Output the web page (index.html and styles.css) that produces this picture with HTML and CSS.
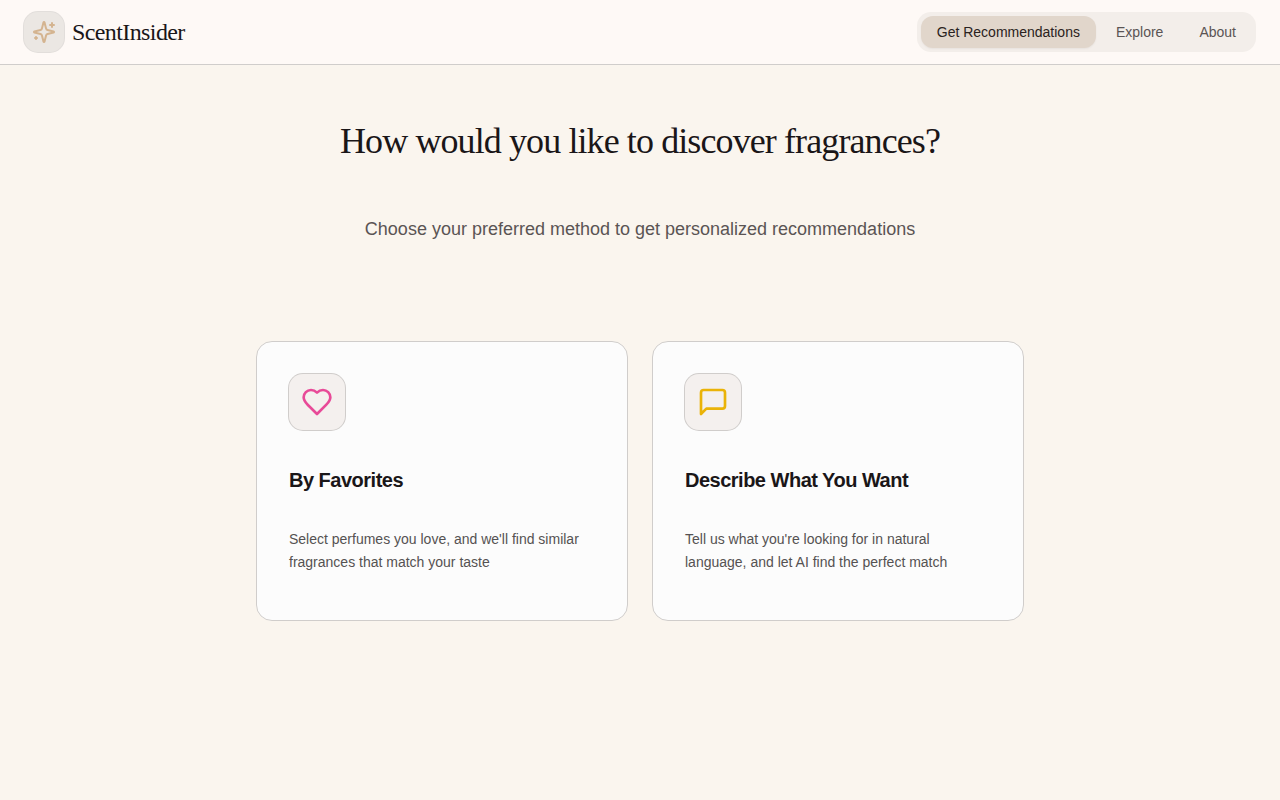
FILE: index.html
```html
<!DOCTYPE html>
<html lang="en">
<head>
    <meta charset="UTF-8">
    <meta name="viewport" content="width=device-width, initial-scale=1.0">
    <title>ScentInsider</title>
    <link rel="stylesheet" href="styles.css">
</head>
<body>
    <header class="header">
        <a class="brand" href="#">
            <span class="brand-icon">
                <svg width="24" height="24" viewBox="0 0 24 24">
                    <path d="M9.937 15.5A2 2 0 0 0 8.5 14.063l-6.135-1.582a.5.5 0 0 1 0-.962L8.5 9.936A2 2 0 0 0 9.937 8.5l1.582-6.135a.5.5 0 0 1 .963 0L14.063 8.5A2 2 0 0 0 15.5 9.937l6.135 1.581a.5.5 0 0 1 0 .964L15.5 14.063a2 2 0 0 0-1.437 1.437l-1.582 6.135a.5.5 0 0 1-.963 0z"/>
                    <path d="M20 3v4"/>
                    <path d="M22 5h-4"/>
                    <path d="M4 17v2"/>
                    <path d="M5 18H3"/>
                </svg>
            </span>
            <span class="brand-name">ScentInsider</span>
        </a>
        <nav class="nav">
            <a class="active" href="#">Get Recommendations</a>
            <a href="#">Explore</a>
            <a href="#">About</a>
        </nav>
    </header>

    <main class="container">
        <h1>How would you like to discover fragrances?</h1>
        <p class="subtitle">Choose your preferred method to get personalized recommendations</p>

        <div class="cards">
            <a class="card" href="#">
                <span class="card-icon favorites">
                    <svg width="32" height="32" viewBox="0 0 24 24">
                        <path d="M19 14c1.49-1.46 3-3.21 3-5.5A5.5 5.5 0 0 0 16.5 3c-1.76 0-3 .5-4.5 2-1.5-1.5-2.74-2-4.5-2A5.5 5.5 0 0 0 2 8.5c0 2.3 1.5 4.05 3 5.5l7 7Z"/>
                    </svg>
                </span>
                <h2>By Favorites</h2>
                <p>Select perfumes you love, and we'll find similar fragrances that match your taste</p>
            </a>
            <a class="card" href="#">
                <span class="card-icon describe">
                    <svg width="32" height="32" viewBox="0 0 24 24">
                        <path d="M21 15a2 2 0 0 1-2 2H7l-4 4V5a2 2 0 0 1 2-2h14a2 2 0 0 1 2 2z"/>
                    </svg>
                </span>
                <h2>Describe What You Want</h2>
                <p>Tell us what you're looking for in natural language, and let AI find the perfect match</p>
            </a>
        </div>
    </main>
</body>
</html>
```
FILE: styles.css
```css
* {
    box-sizing: border-box;
}
body {
    margin: 0;
    min-height: 100vh;
    font-family: "Liberation Sans", Arial, sans-serif;
    background-color: #faf5ee;
    color: #1a1618;
}
a {
    color: inherit;
    text-decoration: none;
}
h1, h2, p {
    margin: 0;
}
svg {
    display: block;
    fill: none;
    stroke: currentColor;
    stroke-width: 2;
    stroke-linecap: round;
    stroke-linejoin: round;
}
.header {
    display: flex;
    align-items: center;
    justify-content: space-between;
    height: 65px;
    padding: 0 24px;
    background-color: #fef9f6;
    border-bottom: 1px solid #d0cdcb;
}
.brand {
    display: flex;
    align-items: center;
    gap: 8px;
}
.brand-icon {
    padding: 8px;
    border-radius: 14px;
    color: #d4b490;
    background-color: #ebe7e3;
    box-shadow: 0 0 0 1px #e2dedb;
}
.brand-name {
    font-family: "Liberation Serif", "Times New Roman", serif;
    font-size: 24px;
    line-height: 32px;
    letter-spacing: -0.6px;
}
.nav {
    display: flex;
    gap: 4px;
    padding: 4px;
    border-radius: 14px;
    background-color: #f3eeea;
}
.nav a {
    padding: 6px 16px;
    border-radius: 12px;
    font-size: 14px;
    line-height: 20px;
    color: #5a5454;
}
.nav a.active {
    color: #2a2220;
    background-color: #e1d6cb;
    box-shadow: 0 1px 2px rgba(0, 0, 0, 0.05);
}
.container {
    max-width: 768px;
    margin: 0 auto;
    padding-top: 56px;
}
h1 {
    font-family: "Liberation Serif", "Times New Roman", serif;
    font-size: 36px;
    font-weight: 400;
    line-height: 40px;
    letter-spacing: -0.9px;
    text-align: center;
}
.subtitle {
    margin-top: 54px;
    font-size: 18px;
    line-height: 28px;
    text-align: center;
    color: #5a5454;
}
.cards {
    display: grid;
    grid-template-columns: 1fr 1fr;
    gap: 24px;
    margin-top: 98px;
}
.card {
    height: 280px;
    padding: 32px;
    border: 1px solid #d0cdcb;
    border-radius: 16px;
    background-color: #fcfcfc;
}
.card-icon {
    display: inline-block;
    padding: 12px;
    border-radius: 14px;
    background-color: #f4f0ee;
    box-shadow: 0 0 0 1px #d0cdcb;
}
.card-icon.favorites {
    color: #e84a98;
}
.card-icon.describe {
    color: #eab308;
}
.card h2 {
    margin-top: 32px;
    font-size: 20px;
    line-height: 28px;
    letter-spacing: -0.5px;
}
.card p {
    margin-top: 34px;
    font-size: 14px;
    line-height: 23px;
    color: #555252;
}
```
